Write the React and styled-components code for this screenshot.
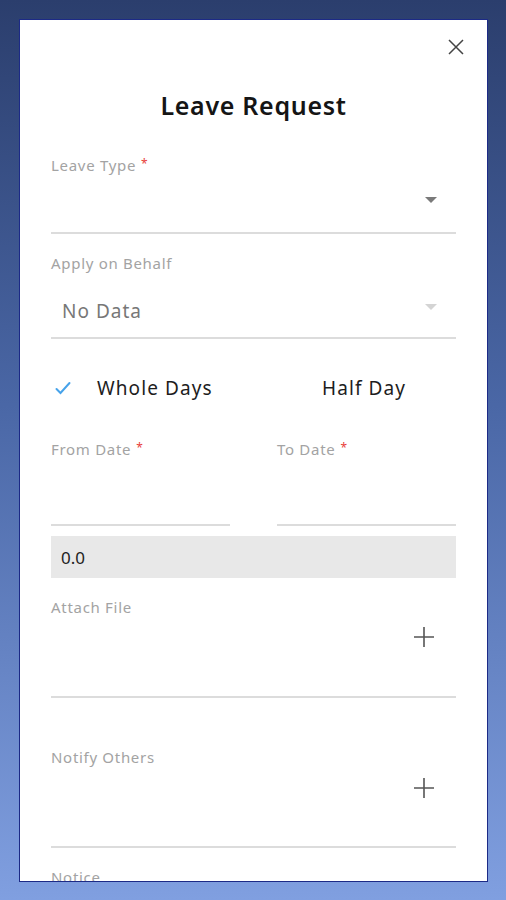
import React from "react";
import styled, { createGlobalStyle } from "styled-components";

const Global = createGlobalStyle`
  html, body { margin: 0; padding: 0; }
  body { font-family: "Noto Sans", "Open Sans", sans-serif; }
  * { box-sizing: border-box; }
`;

const Page = styled.div`
  width: 506px;
  height: 900px;
  overflow: hidden;
  padding: 19px 18px 0 19px;
  background: linear-gradient(180deg, #2b3e6d 0%, #4a67a6 45%, #809fe0 100%);
`;

const Card = styled.div`
  height: 863px;
  background: #fff;
  border: 1px solid #1c2a86;
  overflow: hidden;
  padding: 18px 31px 0 31px;
  display: flex;
  flex-direction: column;
  & > * { flex-shrink: 0; }
`;

const Header = styled.div`
  display: flex;
  justify-content: flex-end;
  height: 16px;
  margin-right: -9px;
`;

const CloseBtn = styled.button`
  border: 0;
  background: none;
  padding: 0;
  width: 18px;
  height: 18px;
  color: #444;
  display: flex;
`;

const Title = styled.h1`
  margin: 35px 0 0;
  height: 32px;
  line-height: 32px;
  text-align: center;
  font-size: 25px;
  font-weight: 600;
  color: #151515;
  letter-spacing: 0.7px;
`;

const Label = styled.div`
  margin-top: ${(p) => p.$mt}px;
  height: 20px;
  line-height: 20px;
  font-size: 15px;
  color: #a3a3a3;
  letter-spacing: 0.7px;
  white-space: nowrap;
`;

const Req = styled.span`
  color: #e8403a;
  font-size: 12px;
  margin-left: 5px;
  vertical-align: 3px;
`;

const Control = styled.div`
  height: ${(p) => p.$h}px;
  border-bottom: 2px solid #dcdcdc;
  display: flex;
  align-items: ${(p) => p.$align || "center"};
  justify-content: space-between;
  padding: ${(p) => p.$pad || "0"};
`;

const Value = styled.span`
  font-size: 19px;
  color: #777;
  letter-spacing: 1px;
  padding-left: 11px;
`;

const Arrow = styled.span`
  width: 0;
  height: 0;
  border-left: 6px solid transparent;
  border-right: 6px solid transparent;
  border-top: 6px solid ${(p) => (p.$light ? "#d4d4d4" : "#7a7a7a")};
  margin: 0 19px ${(p) => p.$lift || 0}px auto;
`;

const Toggle = styled.div`
  margin-top: 29px;
  height: 40px;
  display: flex;
  align-items: center;
`;

const Option = styled.div`
  display: flex;
  align-items: center;
  width: ${(p) => p.$w}px;
  padding-left: ${(p) => p.$pl}px;
  font-size: 19px;
  color: #1d1d1d;
  letter-spacing: 1.1px;
  white-space: nowrap;
`;

const Check = styled.svg`
  width: 16px;
  height: 14px;
  margin-right: 26px;
`;

const DateGrid = styled.div`
  display: grid;
  grid-template-columns: 1fr 1fr;
  column-gap: 47px;
`;

const Total = styled.div`
  margin-top: 10px;
  height: 42px;
  background: #e8e8e8;
  display: flex;
  align-items: center;
  padding-left: 10px;
  font-size: 17px;
  color: #222;
`;

const PlusBtn = styled.svg`
  width: 22px;
  height: 22px;
  margin-right: 21px;
  margin-left: auto;
`;

const Plus = () => (
  <PlusBtn viewBox="0 0 22 22" fill="none" stroke="#555" strokeWidth="1.6">
    <path d="M11 1v20M1 11h20" />
  </PlusBtn>
);

export default function App() {
  return (
    <>
      <Global />
      <Page>
        <Card>
          <Header>
            <CloseBtn aria-label="close">
              <svg width="18" height="18" viewBox="0 0 18 18" fill="none" stroke="#444" strokeWidth="1.5">
                <path d="M2 2l14 14M16 2L2 16" />
              </svg>
            </CloseBtn>
          </Header>
          <Title>Leave Request</Title>

          <Label $mt={33}>
            Leave Type<Req>*</Req>
          </Label>
          <Control $h={60} $pad="0 0 6px">
            <Arrow />
          </Control>

          <Label $mt={19}>Apply on Behalf</Label>
          <Control $h={66} $pad="12px 0 0">
            <Value>No Data</Value>
            <Arrow $light $lift={8} />
          </Control>

          <Toggle>
            <Option $w={271} $pl={4}>
              <Check viewBox="0 0 16 14" fill="none" stroke="#47a3ea" strokeWidth="2" strokeLinecap="round">
                <path d="M1.5 8l4 4L14.5 2" />
              </Check>
              Whole Days
            </Option>
            <Option $w={134} $pl={0}>Half Day</Option>
          </Toggle>

          <DateGrid>
            <div>
              <Label $mt={30}>
                From Date<Req>*</Req>
              </Label>
              <Control $h={68} />
            </div>
            <div>
              <Label $mt={30}>
                To Date<Req>*</Req>
              </Label>
              <Control $h={68} />
            </div>
          </DateGrid>

          <Total>0.0</Total>

          <Label $mt={19}>Attach File</Label>
          <Control $h={81} $align="flex-start" $pad="9px 0 0">
            <Plus />
          </Control>

          <Label $mt={49}>Notify Others</Label>
          <Control $h={81} $align="flex-start" $pad="10px 0 0">
            <Plus />
          </Control>

          <Label $mt={19}>Notice</Label>
        </Card>
      </Page>
    </>
  );
}
